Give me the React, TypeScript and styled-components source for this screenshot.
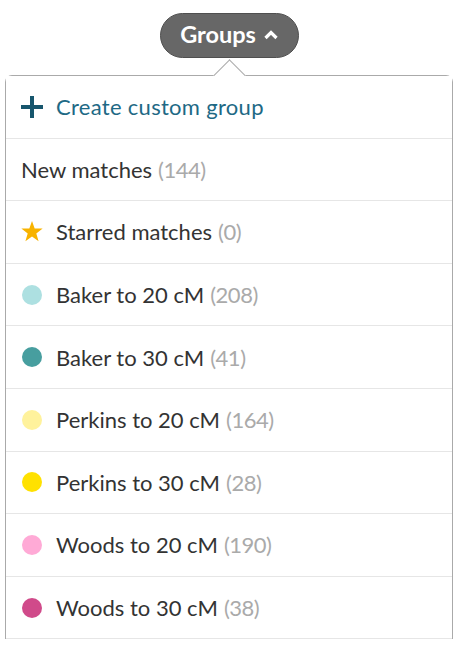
import React from "react";
import styled, { createGlobalStyle } from "styled-components";

const Global = createGlobalStyle`
  html, body { margin: 0; padding: 0; background: #fff; }
  body { font-family: Lato, "Noto Sans", sans-serif; }
`;

const Page = styled.div`
  display: flex;
  flex-direction: column;
  align-items: center;
  padding-top: 13px;
  width: 460px;
`;

const Pill = styled.button`
  display: flex;
  align-items: center;
  justify-content: center;
  gap: 7px;
  width: 139px;
  height: 45px;
  border-radius: 23px;
  background: #676767;
  border: 1px solid #4f4f4f;
  color: #fff;
  font-family: Lato, sans-serif;
  font-weight: 700;
  font-size: 23.5px;
  padding: 0 0 3px 0;
  margin-left: -1px;
`;

const Panel = styled.div`
  position: relative;
  margin-top: 17px;
  width: 446px;
  margin-left: -2px;
  border: 1.5px solid #aaa;
  border-bottom: none;
  border-radius: 7px 7px 0 0;
  background: #fff;
`;

const Notch = styled.div`
  position: absolute;
  top: -12px;
  left: 212px;
  width: 22px;
  height: 22px;
  background: #fff;
  border-left: 1.5px solid #aaa;
  border-top: 1.5px solid #aaa;
  transform: rotate(45deg);
`;

const Row = styled.div`
  display: flex;
  align-items: center;
  height: 61.6px;
  border-bottom: 1.5px solid #e6e6e6;
  padding-left: 15px;
  font-size: 22px;
  color: #333;
  position: relative;
  background: #fff;
`;

const Marker = styled.span`
  width: 22px;
  display: flex;
  align-items: center;
  justify-content: center;
  margin-right: 13px;
`;

const Dot = styled.span<{ $c: string }>`
  width: 20px;
  height: 20px;
  border-radius: 50%;
  background: ${(p) => p.$c};
`;

const Label = styled.span<{ $accent?: boolean }>`
  color: ${(p) => (p.$accent ? "#1e6985" : "#333")};
  letter-spacing: ${(p) => (p.$accent ? "0.3px" : "0")};
`;

const Count = styled.span`
  color: #aaa;
  margin-left: 6px;
  letter-spacing: -0.5px;
`;

const groups = [
  { name: "Baker to 20 cM", n: 208, c: "#ade0e1" },
  { name: "Baker to 30 cM", n: 41, c: "#479e9f" },
  { name: "Perkins to 20 cM", n: 164, c: "#fff29c" },
  { name: "Perkins to 30 cM", n: 28, c: "#ffe100" },
  { name: "Woods to 20 cM", n: 190, c: "#ffaad6" },
  { name: "Woods to 30 cM", n: 38, c: "#d04a8a" },
];

export default function App() {
  return (
    <>
      <Global />
      <Page>
        <Pill>
          Groups
          <svg width="16" height="11" viewBox="0 0 16 11">
            <path d="M2.5 9 L8 3.5 L13.5 9" fill="none" stroke="#fff" strokeWidth="3.2" />
          </svg>
        </Pill>
        <Panel>
          <Notch />
          <Row>
            <Marker>
              <svg width="22" height="22" viewBox="0 0 22 22">
                <rect x="0" y="9" width="22" height="4" fill="#17566d" />
                <rect x="9" y="0" width="4" height="22" fill="#17566d" />
              </svg>
            </Marker>
            <Label $accent>Create custom group</Label>
          </Row>
          <Row>
            <Label>New matches</Label>
            <Count>(144)</Count>
          </Row>
          <Row>
            <Marker>
              <svg width="24" height="23" viewBox="0 0 24 23">
                <path
                  d="M12 0 L14.9 8.2 L23.6 8.3 L16.7 13.6 L19.2 22 L12 17 L4.8 22 L7.3 13.6 L0.4 8.3 L9.1 8.2 Z"
                  fill="#f8b300"
                />
              </svg>
            </Marker>
            <Label>Starred matches</Label>
            <Count>(0)</Count>
          </Row>
          {groups.map((g) => (
            <Row key={g.name}>
              <Marker>
                <Dot $c={g.c} />
              </Marker>
              <Label>{g.name}</Label>
              <Count>({g.n})</Count>
            </Row>
          ))}
        </Panel>
      </Page>
    </>
  );
}
